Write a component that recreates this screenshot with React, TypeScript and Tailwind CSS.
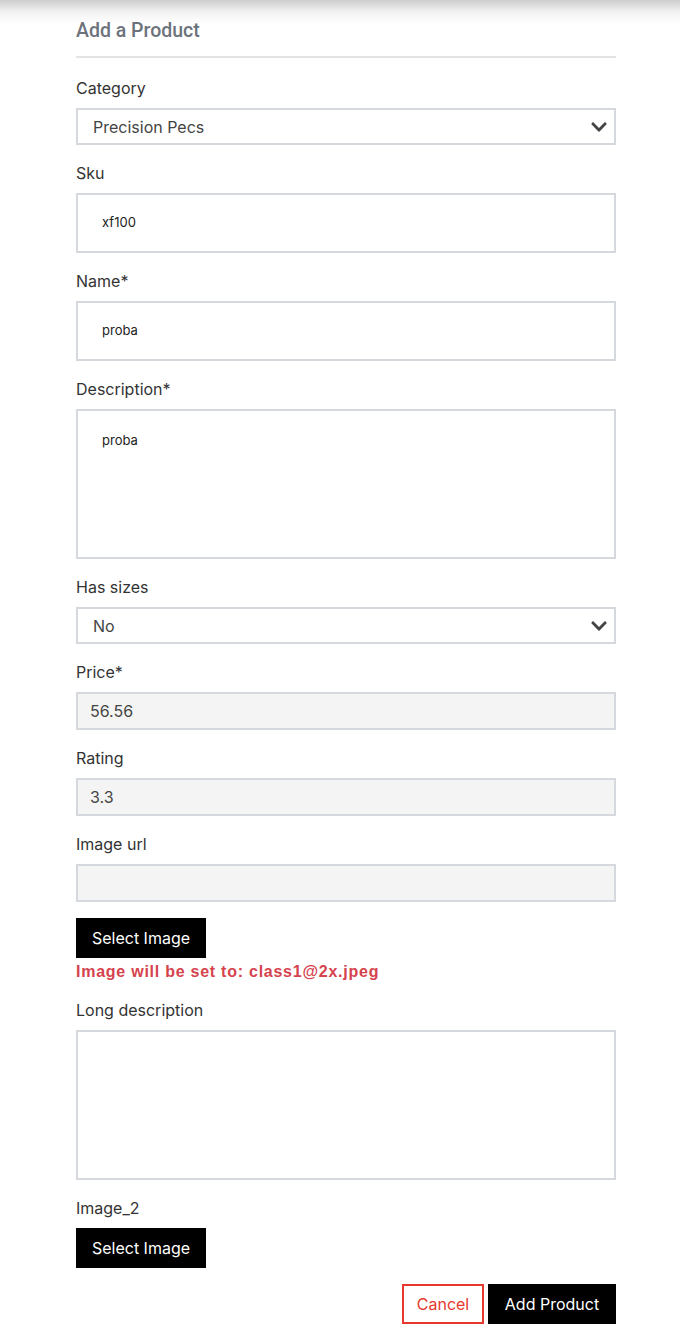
import React from 'react'
import { FaChevronDown } from 'react-icons/fa'

const Label = ({ children, first }: { children: React.ReactNode; first?: boolean }) => (
  <label className={(first ? 'mt-[20px] ' : 'mt-[18px] ') + 'block text-[16px] leading-5 text-[#333] mb-[10px]'}>{children}</label>
)

const Select = ({ value }: { value: string }) => (
  <div className="flex items-center justify-between h-[37px] border-2 border-[#d5d8dc] pl-[15px] pr-[6px] text-[16px] text-[#444]">
    <span>{value}</span>
    <FaChevronDown className="text-[#444] w-[18px] h-[18px]" />
  </div>
)

const TextInput = ({ value }: { value: string }) => (
  <div className="flex items-center h-[60px] border-2 border-[#d5d8dc] px-[24px] text-[13px] text-[#222]">{value}</div>
)

const GreyInput = ({ value }: { value: string }) => (
  <div className="flex items-center h-[38px] border-2 border-[#d5d8dc] bg-[#f4f4f4] px-[12px] text-[16px] text-[#444]">{value}</div>
)

const Area = ({ value }: { value?: string }) => (
  <div className="h-[150px] border-2 border-[#d5d8dc] px-[24px] pt-[20px] text-[13px] text-[#222]">{value}</div>
)

const BlackButton = ({ children, className = '' }: { children: React.ReactNode; className?: string }) => (
  <button className={'bg-black text-white text-[16px] h-[40px] ' + className}>{children}</button>
)

export default function App() {
  return (
    <div className="min-h-[1340px] bg-white bg-[linear-gradient(to_bottom,#cdcdcd_0px,#f2f2f2_12px,#ffffff_24px)] font-['Inter',sans-serif]">
      <div className="mx-[76px] w-[540px] pt-[18px]">
        <h1 className="font-['Roboto',sans-serif] font-medium text-[19.5px] leading-[26px] text-[#6c727b]">Add a Product</h1>
        <div className="h-[2px] bg-[#e3e3e3] mt-[12px]" />

        <Label first>Category</Label>
        <Select value="Precision Pecs" />

        <Label>Sku</Label>
        <TextInput value="xf100" />

        <Label>Name*</Label>
        <TextInput value="proba" />

        <Label>Description*</Label>
        <Area value="proba" />

        <Label>Has sizes</Label>
        <Select value="No" />

        <Label>Price*</Label>
        <GreyInput value="56.56" />

        <Label>Rating</Label>
        <GreyInput value="3.3" />

        <Label>Image url</Label>
        <GreyInput value="" />

        <BlackButton className="mt-[16px] w-[130px]">Select Image</BlackButton>
        <p className="font-['Liberation_Sans',sans-serif] font-bold text-[16px] leading-5 text-[#d5434e] tracking-[0.75px] mt-[4px]">
          Image will be set to: class1@2x.jpeg
        </p>

        <Label>Long description</Label>
        <Area />

        <Label>Image_2</Label>
        <BlackButton className="w-[130px] block">Select Image</BlackButton>

        <div className="flex justify-end gap-[4px] mt-[16px]">
          <button className="h-[40px] w-[82px] border-2 border-[#e6392e] text-[#e6392e] text-[16px]">Cancel</button>
          <BlackButton className="w-[128px]">Add Product</BlackButton>
        </div>
      </div>
    </div>
  )
}
